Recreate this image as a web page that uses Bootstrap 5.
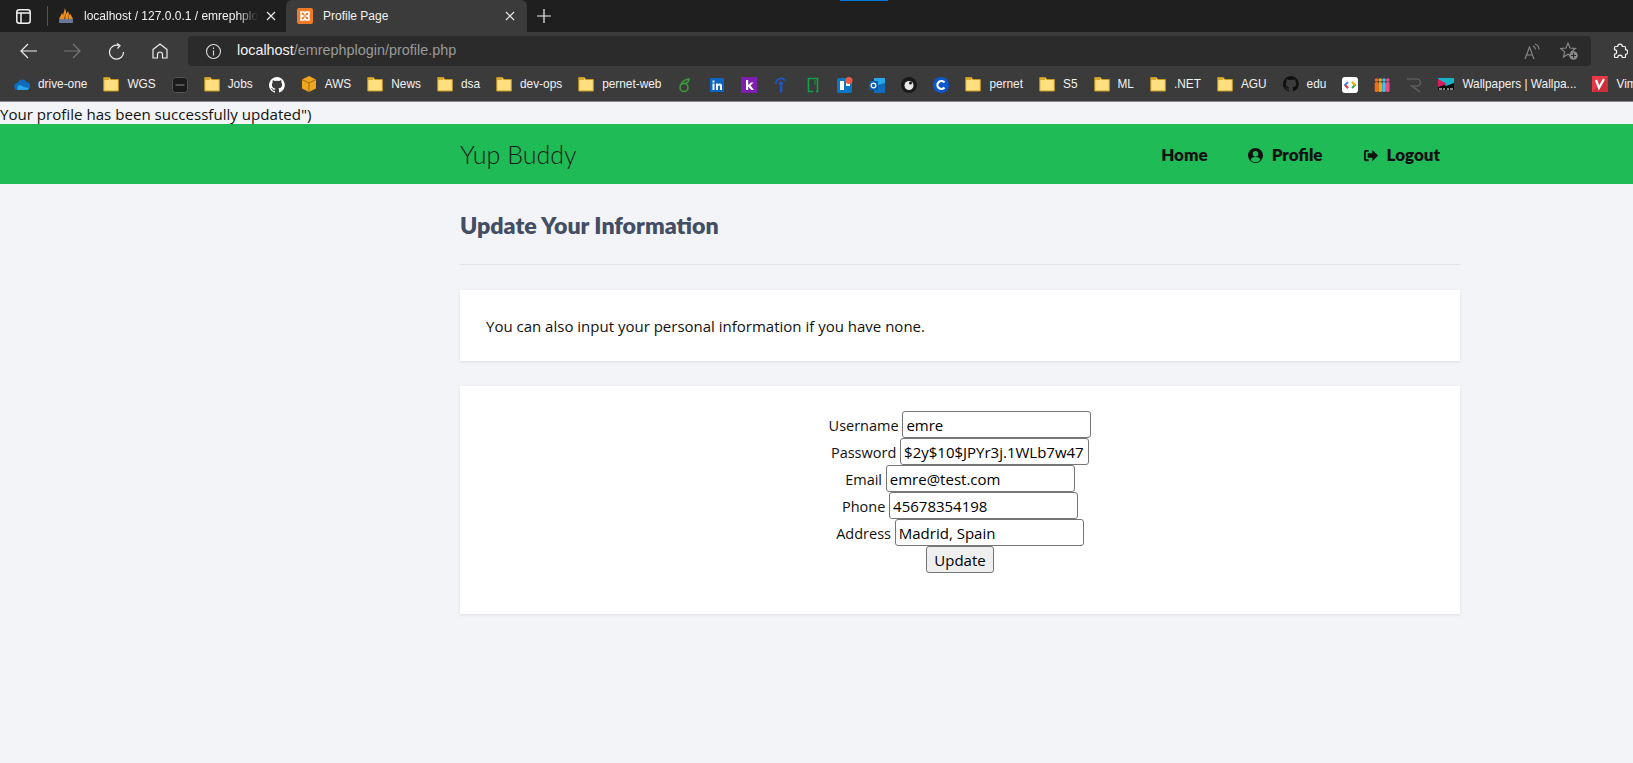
<!doctype html>
<html lang="en">
<head>
<meta charset="UTF-8">
<title>Profile Page</title>
<link href="https://cdn.jsdelivr.net/npm/bootstrap@5.3.0/dist/css/bootstrap.min.css" rel="stylesheet">
<style>
body { background: #f2f4f8; color: #111; font-family: "Open Sans", sans-serif; font-size: 15px; overflow: hidden; }
.chrome-ui { font-family: "Liberation Sans", sans-serif; color: #f2f2f2; font-size: 12px; }
.tabstrip { background: #1f1f1f; height: 32px; position: relative; }
.tabstrip .blue-tick { position: absolute; left: 840px; top: 0; width: 48px; height: 1px; background: #0078d4; }
.panel-btn { width: 47px; flex: none; }
.tab-sep { width: 1px; height: 20px; background: #555; margin-right: 10px; }
.chrome-tab { height: 32px; white-space: nowrap; }
.tab-one { width: 228px; padding-right: 10px; }
.tab-two { width: 241px; background: #3b3b3b; border-radius: 6px 6px 0 0; padding: 0 12px 0 11px; }
.tab-title { flex-grow: 1; overflow: hidden; margin-left: 10px; }
.tab-one .tab-title { -webkit-mask-image: linear-gradient(to right, #000 88%, transparent); mask-image: linear-gradient(to right, #000 88%, transparent); }
.tool-row { background: #3b3b3b; height: 36px; padding-top: 2px; }
.tool-btn { width: 44px; flex: none; }
.url-bar { background: #2b2b2b; height: 30px; width: 1403px; margin-left: 6px; border-radius: 4px; font-size: 14.4px; padding-left: 17px; }
.url-bar .dim { color: #9a9a9a; }
.bookmarks { background: #3b3b3b; height: 34px; padding-left: 14px; gap: 16px; font-size: 11.85px; border-bottom: 1px solid #8a8a8a; white-space: nowrap; overflow: hidden; }
.bookmarks svg { flex: none; }
.bm-item { gap: 8px; }
.flash-line { height: 22px; line-height: 25px; font-size: 15.1px; }
.top-green { background: #1fbb57; height: 60px; padding: 0; }
.page-wrap { width: 1000px; margin-left: 460px; }
.top-green .page-wrap { padding-top: 2px; }
.brand-name { font-family: "Lato", sans-serif; font-size: 25px; font-weight: 300; color: #1a1a1a; padding: 0; margin: 0; }
.top-green .nav-link { font-family: "Lato", sans-serif; font-weight: 800; font-size: 17px; color: #111; padding: 0 20px; }
.top-green .nav-link svg { margin-right: 9px; vertical-align: -2px; }
.head-block { height: 81px; padding-top: 25px; border-bottom: 1px solid #e1e3e9; margin-bottom: 25px; }
.head-block h2 { font-family: "Lato", sans-serif; font-weight: 800; font-size: 23.2px; color: #434d63; margin: 0; line-height: 32px; }
.info-card { border: 0; border-radius: 0; box-shadow: 0 1px 3px rgba(0,0,0,.09); margin-bottom: 25px; }
.intro-box { height: 71px; padding: 24px 24px 24px 26px; line-height: 24px; }
.form-box { height: 228px; padding-top: 25px; text-align: center; line-height: 22px; font-size: 14.5px; }
.form-box input { width: 189px; height: 27px; padding: 1px 3px; font-size: 15px; border: 1px solid #767676; border-radius: 3px; vertical-align: baseline; }
.form-box button { height: 27px; width: 68px; padding: 0; font-size: 15px; background: #efefef; border: 1px solid #767676; border-radius: 3px; }
</style>
</head>
<body>
<div class="chrome-ui">
    <!-- tab strip -->
    <div class="tabstrip d-flex align-items-center">
        <span class="blue-tick"></span>
        <div class="panel-btn d-flex justify-content-center">
            <svg width="15" height="15" viewBox="0 0 15 15" fill="none" stroke="#f2f2f2" stroke-width="1.5"><rect x=".8" y=".8" width="13.400" height="13.400" rx="2.500"/><path d="M.8 4h13.400M5 4v10"/></svg>
        </div>
        <span class="tab-sep"></span>
        <div class="chrome-tab tab-one d-flex align-items-center">
            <svg width="16" height="16" viewBox="0 0 16 16"><path d="M1 11 4 5l1 2 2-7 1.500 6L10 3l1.500 4 1-1L15 11z" fill="#ea8f1f"/><path d="M6 11 7.500 5v6zM10 11V6l1 5z" fill="#7a4a12"/><rect x="1" y="11" width="14" height="4" rx="1" fill="#6a7898"/></svg>
            <span class="tab-title">localhost / 127.0.0.1 / emrephplo</span>
            <svg class="ms-2" width="10" height="10" viewBox="0 0 10 10" stroke="#eee" stroke-width="1.2"><path d="M1 1l8 8M9 1l-8 8"/></svg>
        </div>
        <div class="chrome-tab tab-two d-flex align-items-center">
            <svg width="16" height="16" viewBox="0 0 16 16"><rect width="16" height="16" rx="2" fill="#ef7a27"/><path d="M4 4h3l1 2 1-2h3v3l-2 1 2 1v3H9L8 10l-1 2H4V9l2-1-2-1z" fill="none" stroke="#fff" stroke-width="1.600"/></svg>
            <span class="tab-title">Profile Page</span>
            <svg width="10" height="10" viewBox="0 0 10 10" stroke="#eee" stroke-width="1.2"><path d="M1 1l8 8M9 1l-8 8"/></svg>
        </div>
        <svg style="margin-left:10px" width="14" height="14" viewBox="0 0 14 14" stroke="#eee" stroke-width="1.2"><path d="M7 0v14M0 7h14"/></svg>
    </div>

    <!-- address row -->
    <div class="tool-row d-flex align-items-center">
        <div class="d-flex" style="padding-left:6px">
            <div class="tool-btn d-flex justify-content-center"><svg width="17" height="16" viewBox="0 0 17 16" fill="none" stroke="#eee" stroke-width="1.2"><path d="M17 8H1M8 1 1 8l7 7"/></svg></div>
            <div class="tool-btn d-flex justify-content-center"><svg width="17" height="16" viewBox="0 0 17 16" fill="none" stroke="#777" stroke-width="1.2"><path d="M0 8h16M9 1l7 7-7 7"/></svg></div>
            <div class="tool-btn d-flex justify-content-center"><svg width="17" height="17" viewBox="0 0 17 17" fill="none" stroke="#eee" stroke-width="1.2"><path d="M10.500 2.500A7 7 0 1 0 15.500 9M9 .5l3 2.200-2.500 2.800"/></svg></div>
            <div class="tool-btn d-flex justify-content-center"><svg width="16" height="16" viewBox="0 0 16 16" fill="none" stroke="#eee" stroke-width="1.2" stroke-linejoin="round"><path d="M1 6.500 8 1l7 5.500V15h-4.500v-3.500a2.500 2.500 0 0 0-5 0V15H1z"/></svg></div>
        </div>
        <div class="url-bar d-flex align-items-center">
            <svg class="me-2" width="17" height="17" viewBox="0 0 17 17" fill="none" stroke="#ddd" stroke-width="1.1"><circle cx="8.500" cy="8.500" r="7"/><path d="M8.500 7.500v5M8.500 4.500v1.400"/></svg>
            <span style="margin-left:7px">localhost<span class="dim">/emrephplogin/profile.php</span></span>
            <svg class="ms-auto" width="16" height="17" viewBox="0 0 16 17" fill="none" stroke="#8a8a8a" stroke-width="1.100"><path d="M1 16 5.500 4 10 16M2.500 12h6M9 3a4 4 0 0 1 2.500 3.500M11 1a6 6 0 0 1 4 5.500"/></svg>
            <svg style="margin:0 13px 0 20px" width="18" height="18" viewBox="0 0 18 18"><path d="M8 1l2 5 5.500.4-4.200 3.400 1.300 5.200L8 12.200 3.400 15l1.300-5.200L.5 6.400 6 6z" fill="none" stroke="#8a8a8a" stroke-width="1.100"/><circle cx="13.500" cy="13.500" r="4.300" fill="#8a8a8a"/><path d="M13.500 11v5M11 13.500h5" stroke="#2b2b2b"/></svg>
        </div>
        <svg style="margin-left:21px" width="16" height="16" viewBox="0 0 16 16" fill="none" stroke="#f2f2f2" stroke-width="1.200" stroke-linejoin="round"><path d="M3.500 3.500h2.200a2.300 2.300 0 0 1 4.600 0h2.200a1 1 0 0 1 1 1v2.200a2.300 2.300 0 0 1 0 4.600v2.200a1 1 0 0 1-1 1H10.300a2.300 2.300 0 0 0-4.600 0H3.500a1 1 0 0 1-1-1v-2.400a2.200 2.200 0 0 0 0-4.400V4.500a1 1 0 0 1 1-1z"/></svg>
    </div>

    <!-- bookmarks -->
    <div class="bookmarks d-flex align-items-center" id="bookmarkBar"></div>
</div>

<div class="flash-line">Your profile has been successfully updated")</div>

<nav class="navbar top-green">
    <div class="page-wrap d-flex align-items-center justify-content-between">
        <a class="navbar-brand brand-name" href="#">Yup Buddy</a>
        <ul class="navbar-nav flex-row">
            <li class="nav-item"><a class="nav-link" href="#">Home</a></li>
            <li class="nav-item"><a class="nav-link" href="#"><svg width="15" height="15" viewBox="0 0 16 16"><circle cx="8" cy="8" r="8" fill="#111"/><circle cx="8" cy="6.200" r="3" fill="#1fbb57"/><path d="M3 13a5 3.500 0 0 1 10 0 7 7 0 0 1-10 0z" fill="#1fbb57"/></svg>Profile</a></li>
            <li class="nav-item"><a class="nav-link" href="#"><svg width="15" height="15" viewBox="0 0 16 16" fill="#111"><path d="M6 2H3a2 2 0 0 0-2 2v8a2 2 0 0 0 2 2h3v-2H3V4h3z"/><path d="M10 2l6 6-6 6v-3.500H5v-5h5z"/></svg>Logout</a></li>
        </ul>
    </div>
</nav>

<div class="page-wrap">
    <div class="head-block"><h2>Update Your Information</h2></div>

    <div class="card info-card">
        <div class="intro-box">You can also input your personal information if you have none.</div>
    </div>

    <div class="card info-card">
        <form class="form-box" onsubmit="return false">
            <label>Username</label> <input type="text" value="emre"><br>
            <label>Password</label> <input type="text" value="$2y$10$JPYr3j.1WLb7w47"><br>
            <label>Email</label> <input type="text" value="emre@test.com"><br>
            <label>Phone</label> <input type="text" value="45678354198"><br>
            <label>Address</label> <input type="text" value="Madrid, Spain"><br>
            <button type="submit">Update</button>
        </form>
    </div>
</div>

<script src="https://cdn.jsdelivr.net/npm/bootstrap@5.3.0/dist/js/bootstrap.bundle.min.js"></script>
<script>
    // Bookmark bar built from a list, icon markup per entry
    const folder = '<svg width="16" height="16" viewBox="0 0 16 16"><path d="M.8 1.500h5.500l1.500 2h7.500v11.500H.8z" fill="#ffdf80" stroke="#c99a1e"/><path d="M1 2h5v2H1z" fill="#d9a92c"/></svg>';
    const icon = (body) => '<svg width="16" height="16" viewBox="0 0 16 16">' + body + '</svg>';
    const github = (c) => icon('<path fill="' + c + '" d="M8 0a8 8 0 0 0-2.500 15.600c.4.100.5-.2.500-.4v-1.400c-2.200.5-2.700-1-2.700-1-.4-.9-.9-1.200-.9-1.200-.7-.5.100-.5.100-.5.800.100 1.200.8 1.200.8.700 1.200 1.900.9 2.300.7.100-.5.300-.9.500-1.100-1.800-.2-3.600-.9-3.600-4 0-.9.300-1.600.8-2.100-.1-.2-.4-1 .1-2.100 0 0 .7-.2 2.200.8a7.600 7.600 0 0 1 4 0c1.500-1 2.200-.8 2.200-.8.400 1.100.2 1.900.1 2.100.5.600.8 1.300.8 2.100 0 3.100-1.900 3.700-3.700 3.900.3.300.6.800.6 1.500v2.200c0 .2.100.5.600.4A8 8 0 0 0 8 0z"/>');
    const person = (x, c) => '<circle cx="' + x + '" cy="3" r="1.800" fill="' + c + '"/><rect x="' + (x - 1.8) + '" y="5" width="3.600" height="10" rx="1.500" fill="' + c + '"/>';
    const bookmarks = [
        [icon('<path d="M4 14a3.500 3.500 0 0 1-.5-7A5 5 0 0 1 12.500 6 4 4 0 0 1 12 14z" fill="#0f6cbd"/><path d="M4 14a3 3 0 0 1 2-5l4 2 5 1a3 3 0 0 1-3 2z" fill="#28a8ea"/>'), 'drive-one'],
        [folder, 'WGS'],
        [icon('<rect x=".5" y=".5" width="15" height="15" rx="3" fill="#1b1b1b" stroke="#555"/><path d="M3.500 7h9v2h-9z" fill="#555"/>'), ''],
        [folder, 'Jobs'],
        [github('#fff'), ''],
        [icon('<path d="M8 0 15 3.500v9L8 16 1 12.500v-9z" fill="#f0a51e"/><path d="M8 7v9M1 3.500 8 7l7-3.500" stroke="#9a6a10" fill="none"/>'), 'AWS'],
        [folder, 'News'],
        [folder, 'dsa'],
        [folder, 'dev-ops'],
        [folder, 'pernet-web'],
        [icon('<circle cx="7" cy="10.500" r="4" fill="none" stroke="#3d9a3a" stroke-width="1.600"/><path d="M4 8Q5 3 12 2q0 4-5 4.500" fill="none" stroke="#3d9a3a" stroke-width="1.600"/>'), ''],
        [icon('<rect x="1" y="1" width="14" height="14" fill="#0a66c2"/><path d="M3.500 6.500h2V13h-2zM3.500 3.500h2v2h-2zM7 6.500h2v1c1-1.500 4-1.500 4 1.200V13h-2V9.500c0-1.500-2-1.500-2 0V13H7z" fill="#fff"/>'), ''],
        [icon('<rect width="16" height="16" fill="#7e1fb0"/><path d="M5 3h2.200v5L10 5.500h2.500L9.500 8.500 13 13h-2.700L7.200 9.500V13H5z" fill="#fff"/>'), ''],
        [icon('<path d="M3 7a5 5 0 0 1 9-3.500" fill="none" stroke="#1f56c9" stroke-width="1.500"/><circle cx="8" cy="6.500" r="2" fill="#1f56c9"/><rect x="6.800" y="8.500" width="2.500" height="7" fill="#1f56c9"/>'), ''],
        [icon('<path d="M8 1.500H3.500v13H8M8 1.500h4.500v13H11" fill="none" stroke="#12a14b" stroke-width="1.600"/><path d="M10 3v5" stroke="#12a14b" stroke-width="1"/>'), ''],
        [icon('<rect x="0" y="1" width="15" height="15" rx="2" fill="#0b76c4"/><rect x="3" y="4" width="4" height="9" fill="#fff"/><rect x="9" y="4" width="4" height="5" fill="#fff"/><circle cx="12" cy="3.500" r="3.500" fill="#eb5a46"/>'), ''],
        [icon('<rect x="5" y="1" width="11" height="14" fill="#28a8ea"/><path d="M5 9l11-3v10H5z" fill="#0f6cbd"/><rect x="0" y="4" width="9" height="9" fill="#0a5aa8"/><circle cx="4.500" cy="8.500" r="2.300" fill="none" stroke="#fff" stroke-width="1.300"/>'), ''],
        [icon('<circle cx="8" cy="8" r="8" fill="#1a1a1a"/><circle cx="8" cy="8.500" r="4.500" fill="#e8e8e8"/><circle cx="9.500" cy="6" r="1.500" fill="#1a1a1a"/>'), ''],
        [icon('<circle cx="8" cy="8" r="8" fill="#0b57d0"/><path d="M11.500 5.500a4 4 0 1 0 0 5" fill="none" stroke="#fff" stroke-width="2.200"/>'), ''],
        [folder, 'pernet'],
        [folder, 'S5'],
        [folder, 'ML'],
        [folder, '.NET'],
        [folder, 'AGU'],
        [github('#111'), 'edu'],
        [icon('<rect width="16" height="16" rx="3" fill="#fff"/><path d="M6 5 3 8l3 3" fill="none" stroke="#4285f4" stroke-width="2"/><path d="M3 8l3 3" stroke="#ea4335" stroke-width="2"/><path d="M10 5l3 3-3 3" fill="none" stroke="#34a853" stroke-width="2"/><path d="M10 5l3 3" stroke="#fbbc05" stroke-width="2"/>'), ''],
        [icon(person(2.5, '#f26a11') + person(6.2, '#f5a01d') + person(10, '#3cc4e8') + person(13.8, '#ef4a86')), ''],
        [icon('<path d="M1 2h10a3.500 3.500 0 0 1 0 7H6l8 6" fill="none" stroke="#5c5c5c" stroke-width="1.600"/>'), ''],
        [icon('<rect y="2" width="16" height="12" fill="#0d0d0d"/><path d="M0 2h16v5L8 10 0 3z" fill="#17b3c4"/><path d="M0 3l9 5-9 3z" fill="#d81b60"/><path d="M1 13h3M5 13h2M9 13h2M12 13h3" stroke="#fff"/>'), 'Wallpapers | Wallpa...'],
        [icon('<rect width="16" height="16" fill="#e63946"/><path d="M16 0v16H0z" fill="#c9303c"/><path d="M4 4l3 8 5-9" fill="none" stroke="#fff" stroke-width="2.200"/>'), 'Vim'],
    ];
    document.getElementById('bookmarkBar').innerHTML = bookmarks
        .map(b => '<div class="bm-item d-flex align-items-center">' + b[0] + (b[1] ? '<span>' + b[1] + '</span>' : '') + '</div>')
        .join('');
</script>
</body>
</html>
